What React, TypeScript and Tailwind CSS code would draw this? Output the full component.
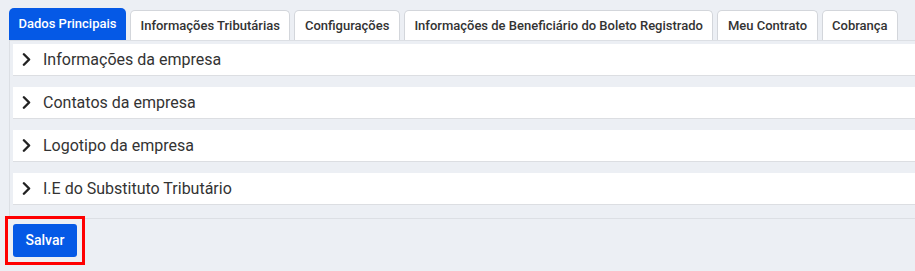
import { ChevronRight } from 'lucide-react';

const tabs = [
  'Dados Principais',
  'Informações Tributárias',
  'Configurações',
  'Informações de Beneficiário do Boleto Registrado',
  'Meu Contrato',
  'Cobrança',
];

const sections = [
  'Informações da empresa',
  'Contatos da empresa',
  'Logotipo da empresa',
  'I.E do Substituto Tributário',
];

export default function App() {
  return (
    <div className="w-[915px] h-[271px] bg-[#eceff4] overflow-hidden" style={{ fontFamily: 'Roboto, "Noto Sans", sans-serif' }}>
      <div className="pl-[9px] pt-[8px]">
        {/* Tabs */}
        <div className="flex items-end gap-[4px] h-[32px]">
          {tabs.map((tab, i) =>
            i === 0 ? (
              <div
                key={tab}
                className="h-[32px] px-[9.5px] flex items-center rounded-t-[5px] bg-[#0559e6] text-white text-[13px] font-medium"
              >
                {tab}
              </div>
            ) : (
              <div
                key={tab}
                className="h-[30px] px-[9.5px] flex items-center rounded-t-[5px] bg-white border border-b-0 border-[#d3d6db] text-[#333] text-[13px] font-medium"
              >
                {tab}
              </div>
            )
          )}
        </div>

        {/* Panel */}
        <div className="border-t border-l border-b border-[#dcdfe4] pl-[3px] pt-[3px] pb-[13px] flex flex-col gap-[11px]">
          {sections.map((s) => (
            <div
              key={s}
              className="h-[32px] bg-white border-b border-[#dcdee2] flex items-center pl-[3px] gap-[6px] text-[16px] text-[#333]"
            >
              <ChevronRight className="w-[21px] h-[21px] text-[#222]" strokeWidth={2.8} />
              <span>{s}</span>
            </div>
          ))}
        </div>
      </div>

      {/* Save */}
      <div className="pl-[5px] mt-[-3px]">
        <div className="inline-block border-[3px] border-[#ff0000] p-[5px]">
          <button className="h-[33px] w-[64px] rounded-[3px] bg-[#0559e6] text-white text-[14px] font-medium">
            Salvar
          </button>
        </div>
      </div>
    </div>
  );
}
